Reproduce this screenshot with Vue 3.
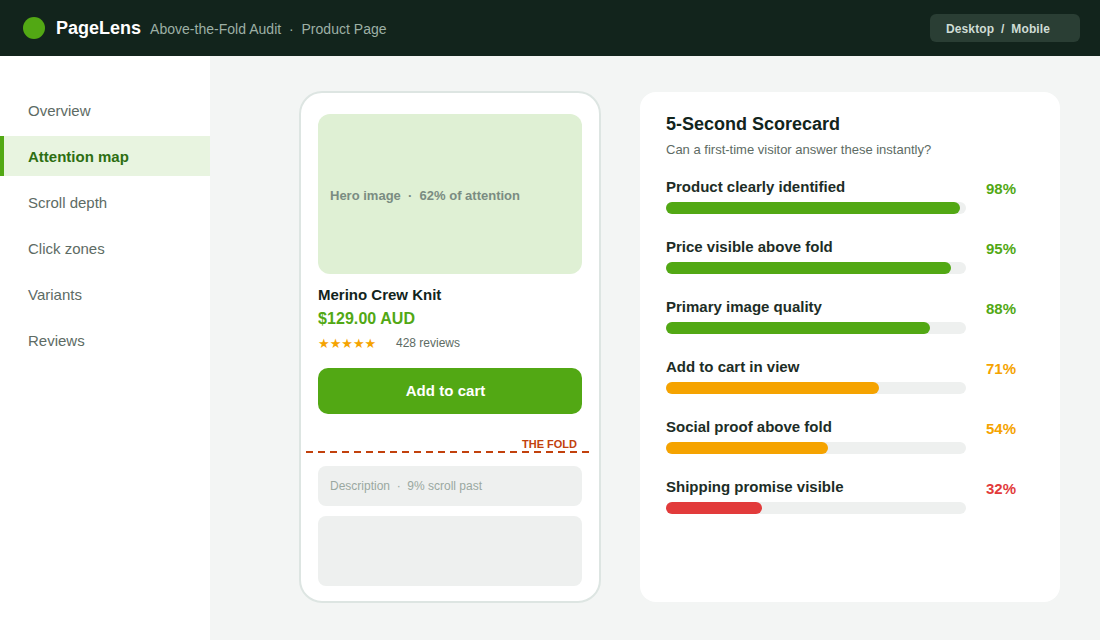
<script setup>
import { ref } from "vue"

const navItems = [
  "Overview",
  "Attention map",
  "Scroll depth",
  "Click zones",
  "Variants",
  "Reviews",
]
const activeItem = ref("Attention map")

const scores = [
  { label: "Product clearly identified", value: 98 },
  { label: "Price visible above fold", value: 95 },
  { label: "Primary image quality", value: 88 },
  { label: "Add to cart in view", value: 71 },
  { label: "Social proof above fold", value: 54 },
  { label: "Shipping promise visible", value: 32 },
]

const level = (value) => {
  if (value >= 80) return "good"
  if (value >= 50) return "fair"
  return "poor"
}
</script>

<template>
  <div class="app">
    <header class="topbar">
      <span class="logo"></span>
      <div class="titles">
        <span class="brand">PageLens</span>
        <span class="context">Above-the-Fold Audit&nbsp; ·&nbsp; Product Page</span>
      </div>
      <button class="device-toggle">Desktop&nbsp; /&nbsp; Mobile</button>
    </header>

    <div class="body">
      <nav class="sidebar">
        <a
          v-for="item in navItems"
          :key="item"
          class="nav-item"
          :class="{ active: item === activeItem }"
          @click="activeItem = item"
        >
          {{ item }}
        </a>
      </nav>

      <main class="content">
        <section class="phone">
          <div class="hero">Hero image&nbsp; ·&nbsp; 62% of attention</div>
          <h2 class="product">Merino Crew Knit</h2>
          <div class="price">$129.00 AUD</div>
          <div class="rating">
            <span class="stars">★★★★★</span>
            <span class="reviews">428 reviews</span>
          </div>
          <button class="cart">Add to cart</button>
          <div class="fold">THE FOLD</div>
          <div class="block description">Description&nbsp; ·&nbsp; 9% scroll past</div>
          <div class="block filler"></div>
        </section>

        <section class="scorecard">
          <h1>5-Second Scorecard</h1>
          <p>Can a first-time visitor answer these instantly?</p>
          <div v-for="score in scores" :key="score.label" class="score" :class="level(score.value)">
            <div class="meter">
              <div class="label">{{ score.label }}</div>
              <div class="track">
                <div class="fill" :style="{ width: score.value + '%' }"></div>
              </div>
            </div>
            <div class="value">{{ score.value }}%</div>
          </div>
        </section>
      </main>
    </div>
  </div>
</template>

<style>
body {
  margin: 0;
}
</style>

<style scoped>
.app {
  display: flex;
  flex-direction: column;
  width: 1100px;
  height: 640px;
  overflow: hidden;
  background: #f3f5f4;
  color: #12241c;
  font-family: "Liberation Sans", Arial, sans-serif;
}

button {
  border: none;
  font-family: inherit;
  cursor: pointer;
}

.topbar {
  display: flex;
  align-items: center;
  box-sizing: border-box;
  height: 56px;
  padding: 0 20px 0 23px;
  background: #12241c;
}

.logo {
  width: 22px;
  height: 22px;
  margin-right: 11px;
  border-radius: 50%;
  background: #52a814;
}

.titles {
  display: flex;
  align-items: baseline;
  gap: 9px;
}

.brand {
  color: #fff;
  font-size: 18px;
  font-weight: bold;
}

.context {
  color: #9db0a5;
  font-size: 14px;
  letter-spacing: 0.02px;
}

.device-toggle {
  width: 150px;
  height: 28px;
  margin-left: auto;
  padding: 1px 16px 0;
  border-radius: 6px;
  background: #2a3e34;
  color: #cfdcd4;
  font-size: 12px;
  font-weight: bold;
  letter-spacing: 0.11px;
  text-align: left;
}

.body {
  display: flex;
  flex: 1;
}

.sidebar {
  display: flex;
  flex-direction: column;
  gap: 6px;
  box-sizing: border-box;
  width: 210px;
  padding-top: 34px;
  background: #fff;
}

.nav-item {
  box-sizing: border-box;
  height: 40px;
  padding-left: 24px;
  border-left: 4px solid transparent;
  color: #5d6b64;
  font-size: 15px;
  line-height: 41px;
  cursor: pointer;
}

.nav-item.active {
  border-left-color: #52a814;
  background: #e8f4e0;
  color: #2d6e12;
  font-weight: bold;
}

.content {
  display: flex;
  align-items: flex-start;
  gap: 39px;
  padding: 35px 0 0 89px;
}

.phone {
  display: flex;
  flex-direction: column;
  box-sizing: border-box;
  width: 302px;
  height: 512px;
  padding: 21px 17px 0;
  border: 2px solid #dde5e2;
  border-radius: 23px;
  background: #fff;
}

.hero {
  height: 160px;
  padding-left: 12px;
  border-radius: 12px;
  background: #dff0d4;
  color: #7a8c82;
  font-size: 13px;
  font-weight: bold;
  line-height: 163px;
}

.product {
  margin: 11px 0 0;
  font-size: 15px;
  line-height: 20px;
}

.price {
  margin-top: 3px;
  color: #52a814;
  font-size: 16px;
  font-weight: bold;
  letter-spacing: 0.07px;
  line-height: 22px;
}

.rating {
  display: flex;
  height: 18px;
  margin-top: 5px;
}

.stars {
  width: 78px;
  color: #f5a300;
  font-family: "DejaVu Sans", sans-serif;
  font-size: 13px;
  line-height: 18px;
}

.reviews {
  color: #5d6b64;
  font-size: 12px;
  line-height: 17px;
}

.cart {
  height: 46px;
  margin-top: 15px;
  padding: 0 9px 1px 0;
  border-radius: 10px;
  background: #52a814;
  color: #fff;
  font-size: 15px;
  font-weight: bold;
  letter-spacing: 0.05px;
}

.fold {
  height: 15px;
  margin: 22px -12px 0;
  padding: 0 17px 2px 0;
  background: repeating-linear-gradient(to right, #c2410c 0 7px, transparent 7px 12px) bottom / 100% 2px no-repeat;
  color: #c2410c;
  font-size: 11px;
  font-weight: bold;
  line-height: 16px;
  text-align: right;
}

.block {
  border-radius: 8px;
  background: #eef0ef;
}

.description {
  height: 40px;
  margin-top: 13px;
  padding-left: 12px;
  color: #9aa8a1;
  font-size: 12px;
  line-height: 40px;
}

.filler {
  height: 70px;
  margin-top: 10px;
}

.scorecard {
  box-sizing: border-box;
  width: 420px;
  height: 510px;
  margin-top: 1px;
  padding: 20px 26px 0;
  border-radius: 16px;
  background: #fff;
}

.scorecard h1 {
  margin: 0;
  font-size: 18px;
  line-height: 24px;
}

.scorecard p {
  margin: 5px 0 18px;
  color: #5d6b64;
  font-size: 13px;
  line-height: 18px;
}

.score {
  display: flex;
  gap: 20px;
  height: 60px;
}

.meter {
  width: 300px;
}

.label {
  height: 25px;
  color: #1d2d26;
  font-size: 15px;
  font-weight: bold;
  line-height: 20px;
}

.track {
  height: 12px;
  border-radius: 6px;
  background: #eef0ef;
}

.fill {
  height: 100%;
  border-radius: 6px;
}

.value {
  font-size: 15px;
  font-weight: bold;
  line-height: 24px;
}

.good .fill {
  background: #52a814;
}

.good .value {
  color: #52a814;
}

.fair .fill {
  background: #f5a300;
}

.fair .value {
  color: #f5a300;
}

.poor .fill {
  background: #e23b3b;
}

.poor .value {
  color: #e23b3b;
}
</style>
